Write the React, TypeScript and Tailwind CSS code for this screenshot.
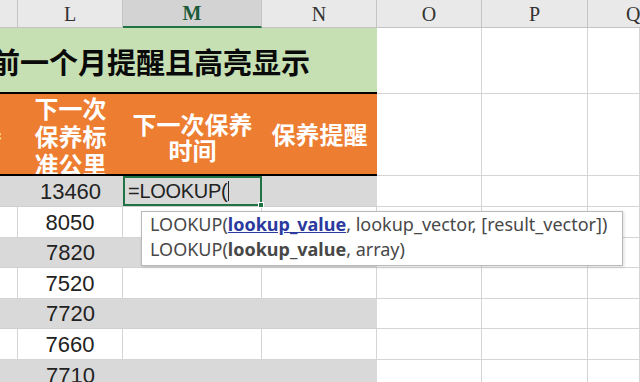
import React from "react";

const cjk = { fontFamily: '"Noto Sans CJK SC", "Noto Sans", sans-serif' };
const num = { fontFamily: '"Liberation Sans", "Noto Sans CJK SC", sans-serif' };
const tip = { fontFamily: '"Noto Sans", sans-serif' };

const rows = [
  { v: "13460", gray: true, h: "h-[31px]" },
  { v: "8050", gray: false, h: "h-[31px]" },
  { v: "7820", gray: true, h: "h-[30px]" },
  { v: "7520", gray: false, h: "h-[31px]" },
  { v: "7720", gray: true, h: "h-[30px]" },
  { v: "7660", gray: false, h: "h-[31px]" },
  { v: "7710", gray: true, h: "h-[31px]" },
];

function Blank({ w }: { w: string }) {
  return <div className={`${w} h-full shrink-0 bg-white border-r border-b border-[#d4d4d4]`} />;
}

function RightCells() {
  return (
    <>
      <Blank w="w-[105px]" />
      <Blank w="w-[106px]" />
      <Blank w="w-[52px]" />
    </>
  );
}

export default function App() {
  return (
    <div className="relative w-[640px] h-[382px] overflow-hidden bg-white">
      {/* column headers */}
      <div className="flex h-[28px] text-[20px] text-[#333]" style={{ fontFamily: '"Liberation Serif", serif' }}>
        <div className="w-[18px] shrink-0 bg-[#e9e9e9] border-r border-b border-[#c4c4c4]" />
        <div className="w-[105px] shrink-0 bg-[#e9e9e9] border-r border-b border-[#c4c4c4] flex items-center justify-center">L</div>
        <div className="w-[139px] shrink-0 bg-[#d3d3d3] border-r border-[#c4c4c4] border-b-2 border-b-[#217346] flex items-center justify-center text-[#1e5b3a] font-bold">M</div>
        <div className="w-[115px] shrink-0 bg-[#e9e9e9] border-r border-b border-[#c4c4c4] flex items-center justify-center">N</div>
        <div className="w-[105px] shrink-0 bg-[#e9e9e9] border-r border-b border-[#c4c4c4] flex items-center justify-center">O</div>
        <div className="w-[106px] shrink-0 bg-[#e9e9e9] border-r border-b border-[#c4c4c4] flex items-center justify-center">P</div>
        <div className="w-[52px] shrink-0 bg-[#e9e9e9] border-b border-[#c4c4c4] flex items-center pl-[38px]">Q</div>
      </div>

      {/* title row */}
      <div className="flex h-[66px]">
        <div className="w-[377px] shrink-0 h-full bg-[#c6e0b4] border-b-2 border-black overflow-hidden flex items-center pt-[3px]">
          <span className="ml-[-9px] whitespace-nowrap text-[29px] font-bold text-[#0a0a0a] leading-none" style={cjk}>
            前一个月提醒且高亮显示
          </span>
        </div>
        <RightCells />
      </div>

      {/* orange header row */}
      <div className="flex h-[82px]">
        <div className="w-[377px] shrink-0 h-full flex bg-[#ed7d31] border-b-2 border-black text-white font-bold text-[24px]" style={cjk}>
          <div className="w-[18px] shrink-0 overflow-hidden flex items-center">
            <span className="ml-[-22px]">养</span>
          </div>
          <div className="w-[105px] shrink-0 overflow-hidden flex flex-col items-center leading-[28px]">
            <span>下一次</span>
            <span>保养标</span>
            <span>准公里</span>
          </div>
          <div className="w-[139px] shrink-0 flex flex-col items-center justify-center pt-[5px] leading-[26px]">
            <span>下一次保养</span>
            <span>时间</span>
          </div>
          <div className="w-[115px] shrink-0 flex items-center justify-center">
            <span>保养提醒</span>
          </div>
        </div>
        <RightCells />
      </div>

      {/* data rows */}
      {rows.map((r, i) => (
        <div key={i} className={`flex ${r.h}`}>
          {r.gray ? (
            <div className="w-[377px] shrink-0 h-full flex bg-[#d9d9d9] border-b border-[#d0d0d0] text-[22px] text-[#222]" style={num}>
              <div className="w-[18px] shrink-0" />
              <div className="w-[105px] shrink-0 flex items-center justify-center">{r.v}</div>
              {i === 0 ? (
                <div className="relative w-[139px] shrink-0 h-full border-2 border-[#217346] flex items-center pl-[3px] text-[20px] tracking-[-0.3px]">
                  <span>=LOOKUP(</span>
                  <span className="w-px h-[20px] bg-[#222] ml-[1px]" />
                  <div className="absolute right-[-4px] bottom-[-4px] w-[6px] h-[6px] bg-[#217346] border border-white" />
                </div>
              ) : (
                <div className="w-[139px] shrink-0" />
              )}
              <div className="w-[115px] shrink-0" />
            </div>
          ) : (
            <div className="w-[377px] shrink-0 h-full flex bg-white text-[22px] text-[#222]" style={num}>
              <div className="w-[18px] shrink-0 border-r border-b border-[#d4d4d4]" />
              <div className="w-[105px] shrink-0 border-r border-b border-[#d4d4d4] flex items-center justify-center">{r.v}</div>
              <div className="w-[139px] shrink-0 border-r border-b border-[#d4d4d4]" />
              <div className="w-[115px] shrink-0 border-r border-b border-[#d4d4d4]" />
            </div>
          )}
          <RightCells />
        </div>
      ))}

      {/* function tooltip */}
      <div
        className="absolute left-[141px] top-[211px] w-[482px] h-[55px] bg-white border border-[#b9b9b9] shadow-[1px_1px_3px_rgba(0,0,0,0.15)] pl-[8px] text-[18px] leading-[25px] text-[#484848]"
        style={tip}
      >
        <div className="whitespace-nowrap">
          LOOKUP(<span className="font-bold text-[#2b3a9e] underline">lookup_value</span>, lookup_vector, [result_vector])
        </div>
        <div className="whitespace-nowrap">
          LOOKUP(<span className="font-bold">lookup_value</span>, array)
        </div>
      </div>
    </div>
  );
}
